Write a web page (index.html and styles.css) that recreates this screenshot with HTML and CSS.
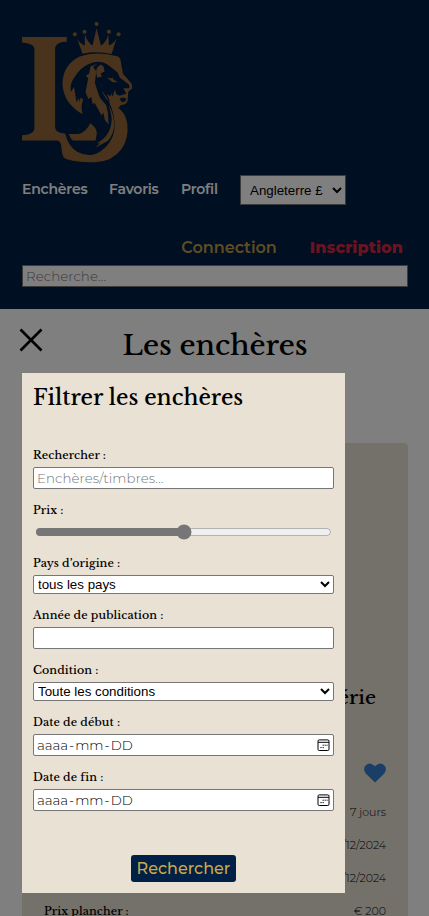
FILE: index.html
```html
<!DOCTYPE html>
<html lang="fr">
<head>
<meta charset="utf-8">
<title>Les enchères</title>
<link rel="stylesheet" href="styles.css">
</head>
<body>
<header class="header">
  <svg class="logo" viewBox="66 36 332 422" fill="currentColor">
    <g>
      <path d="M247 131L231 86Q240 102 254 106L254 73Q262 99 277 106L289 55L302 106Q318 99 324 73L326 106Q341 101 349 85L334 132Q290 122 247 131Z"/>
      <circle cx="224" cy="73" r="6"/><circle cx="253" cy="65" r="6"/><circle cx="289" cy="42" r="6"/><circle cx="326" cy="65" r="6"/><circle cx="355" cy="73" r="6"/>
    </g>
    <path d="M66 81H200V95Q169 95 165 112V352Q166 369 195 370Q205 410 232 425Q275 447 311 415Q349 382 342 330Q338 291 317 258Q300 239 302 217Q303 258 330 277L351 291Q375 305 381 340Q386 385 364 416Q337 453 285 456Q218 456 194 444Q186 438 184 414Q184 393 171 391H66V375Q99 373 103 356V116Q102 99 66 97Z"/>
    <path d="M206 371H235Q258 366 270 339Q288 351 290 368L286 391H218Q210 385 206 371Z"/>
    <path d="M247 312Q188 277 187 219Q189 163 239 139Q287 122 354 139L360 147L368 191L391 217Q397 222 395 236L384 244L383 257L382 272Q378 285 363 284L351 297L332 285L321 252L331 258L333 249L337 260L344 238L348 252L358 257L379 250L374 243L369 234H388L386 223L359 203L352 187L323 164Q303 150 275 158Q242 168 219 207Q209 222 212 245L222 231L229 276L236 264ZM358 266L365 276L375 274L378 264L366 262Z" fill-rule="evenodd"/>
    <path d="M293 160L279 170L288 184L284 218L291 240L299 263L318 285L323 307L325 343L314 329L309 307L304 316L284 279L277 281L273 260L265 267L256 246L264 205L257 197L267 190L271 169Z"/>
    <path d="M249 268Q240 290 247 312L234 288L242 262Z"/>
    <path d="M302 163Q281 174 291 202L305 200L301 190L313 184L310 169Z"/>
    <path d="M321 203L337 205L334 195L340 209L353 216L337 216Z"/>
    <path d="M326 283Q359 355 322 392L285 412L299 399L290 399Q337 373 334 320Z"/>
  </svg>
  <nav class="nav">
    <a>Enchères</a><a class="favorites">Favoris</a><a class="profile">Profil</a>
    <select class="currency"><option>Angleterre £</option></select>
  </nav>
  <div class="account"><a class="login">Connection</a><a class="signup">Inscription</a></div>
  <input class="text-input site-search" placeholder="Recherche...">
</header>
<main class="main">
  <h1 class="page-title">Les enchères</h1>
  <article class="card">
    <h2 class="card-title">Timbres de série</h2>
    <div class="heart-row"><svg class="heart" viewBox="0 0 22 20"><path d="M11 19.5L1.7 10.5Q-.9 7 .8 3.6Q5-2.5 11 3.2Q17-2.5 21.2 3.6Q22.9 7 20.3 10.5Z" fill="currentColor"/></svg></div>
    <div class="detail"><span>7 jours</span></div>
    <div class="detail"><span>01/12/2024</span></div>
    <div class="detail"><span>08/12/2024</span></div>
    <div class="detail last"><b>Prix plancher :</b><span>€ 200</span></div>
  </article>
</main>
<div class="overlay"></div>
<svg class="close" viewBox="0 0 24 24"><path d="M1.5 1.5L22.5 22.5M22.5 1.5L1.5 22.5"/></svg>
<form class="panel">
  <h2 class="panel-title">Filtrer les enchères</h2>
  <div class="fields">
    <div class="field"><label>Rechercher :</label><input class="text-input" placeholder="Enchères/timbres..."></div>
    <div class="field"><label>Prix :</label><input class="range" type="range"></div>
    <div class="field"><label>Pays d’origine :</label><select class="select"><option>tous les pays</option></select></div>
    <div class="field"><label>Année de publication :</label><input class="text-input"></div>
    <div class="field"><label>Condition :</label><select class="select"><option>Toute les conditions</option></select></div>
    <div class="field"><label>Date de début :</label><div class="text-input date"><span>aaaa<i>-</i>mm<i>-</i>DD</span><svg class="calendar" viewBox="0 0 13 13"><rect x="1" y=".9" width="11" height="10.6" rx="1.2" fill="none" stroke="currentColor"/><path d="M1 3.3H12" stroke="currentColor"/><path d="M5.6 6.2H6.8M7.6 6.2H8.8M9.6 6.2H10.6M3.4 8.6H4.6M5.6 8.6H6.8" stroke="currentColor" stroke-width="1"/></svg></div></div>
    <div class="field"><label>Date de fin :</label><div class="text-input date"><span>aaaa<i>-</i>mm<i>-</i>DD</span><svg class="calendar" viewBox="0 0 13 13"><rect x="1" y=".9" width="11" height="10.6" rx="1.2" fill="none" stroke="currentColor"/><path d="M1 3.3H12" stroke="currentColor"/><path d="M5.6 6.2H6.8M7.6 6.2H8.8M9.6 6.2H10.6M3.4 8.6H4.6M5.6 8.6H6.8" stroke="currentColor" stroke-width="1"/></svg></div></div>
  </div>
  <button class="submit" type="button">Rechercher</button>
</form>
</body>
</html>
```
FILE: styles.css
```css
* { box-sizing: border-box; }
html, body { height: 100%; overflow: hidden; }
body { margin: 0; background: #fff; color: #000; font-family: Montserrat, Inter, sans-serif; }
h1, h2 { margin: 0; }
h1, h2, label, b { font-family: "Libre Baskerville", "Liberation Serif", serif; font-weight: 500; }

.header { height: 309px; padding: 22px 21px 22px 22px; background: #002045; display: flex; flex-direction: column; }
.logo { width: 111px; height: 141px; color: #936638; flex: none; }
.nav { display: flex; align-items: center; height: 30px; margin-top: 12px; color: #fff; font-size: 14px; font-weight: 600; white-space: nowrap; }
.nav a { width: 87px; margin-top: -3px; letter-spacing: -.2px; }
.nav .favorites { width: 72px; }
.nav .profile { width: 59px; }
.currency { width: 106px; height: 30px; padding: 0 0 0 5px; font: 13.33px "Liberation Sans", sans-serif; border: 1px solid #767676; background: #fff; color: #000; border-radius: 0; }
.account { display: flex; justify-content: flex-end; height: 20px; margin-top: 33px; line-height: 20px; font-size: 16px; font-weight: 600; padding-right: 5px; gap: 33px; }
.login { color: #be9b46; }
.signup { color: #d22941; font-weight: 800; letter-spacing: .1px; }
.text-input { display: block; width: 100%; height: 22px; padding: 0 3px; border: 1px solid #767676; border-radius: 2px; background: #fff; font: 300 13.33px Montserrat, Inter, sans-serif; letter-spacing: .1px; color: #000; outline: 0; }
.text-input::placeholder { color: #757575; opacity: 1; }
.site-search { margin-top: 7px; flex: none; border-radius: 0; }

.main { padding: 0 21px 0 22px; }
.page-title { height: 134px; padding-top: 17px; text-align: center; font-size: 27.7px; line-height: 38px; }
.card { height: 473px; padding: 240px 22px 0; background: #e9e1d4; border-radius: 4px 4px 0 0; }
.card-title { height: 30px; line-height: 29px; font-size: 19px; text-align: right; padding-right: 10px; }
.heart-row { display: flex; justify-content: flex-end; height: 84px; padding-top: 50px; }
.heart { width: 22px; height: 20px; color: #347dcb; }
.detail { display: flex; justify-content: flex-end; height: 33px; line-height: 30px; font-size: 11px; font-weight: 300; }
.detail b { font-size: 11px; letter-spacing: .1px; }
.last { justify-content: space-between; height: 14px; line-height: 14px; margin-top: 8px; }

.overlay { position: fixed; inset: 0; background: rgba(0, 0, 0, .5); }
.close { position: absolute; left: 19px; top: 327.5px; width: 24px; height: 24px; fill: none; stroke: #000; stroke-width: 2.7; }
.panel { position: absolute; left: 22px; top: 373px; width: 323px; height: 520px; padding: 8px 11px 11px; background: #e9e1d4; display: flex; flex-direction: column; }
.panel-title { height: 63px; line-height: 33px; font-size: 21.4px; }
.fields { display: flex; flex-direction: column; gap: 10px; }
.field label { display: block; height: 23px; line-height: 23px; font-size: 11px; letter-spacing: .1px; }
.range { display: block; width: 297px; height: 20px; margin: 0 2px; accent-color: #767676; }
.select { display: block; width: 100%; height: 19px; padding: 0; font: 13.33px "Liberation Sans", sans-serif; border: 1px solid #767676; border-radius: 2px; background: #fff; color: #000; }
.date { display: flex; align-items: center; justify-content: space-between; letter-spacing: 0; }
.date i { font-style: normal; padding: 0 1px; }
.calendar { width: 13px; height: 13px; }
.submit { width: 105px; height: 27px; margin: 44px auto 0; padding: 0; border: 0; border-radius: 3px; background: #002045; color: #cba848; font: 500 16px Montserrat, Inter, sans-serif; }
```
